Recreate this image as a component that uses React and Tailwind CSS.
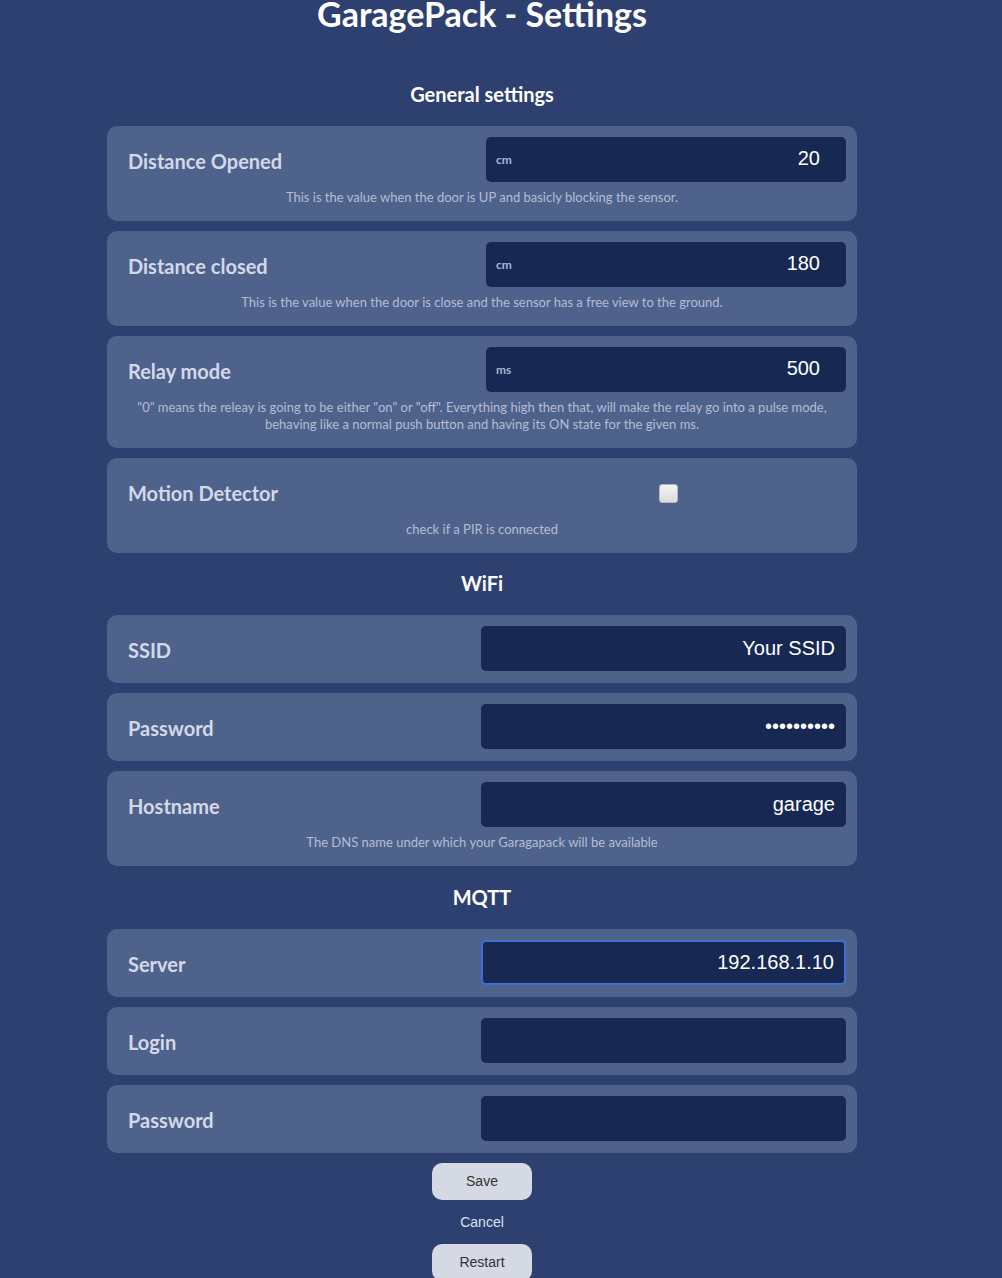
import React from 'react';

const uiFont = { fontFamily: 'Lato, "Noto Sans", sans-serif' };

// one settings card: label on the left, field on the right, optional hint below
const Row = ({ label, children, hint }) => (
  <div className="w-[750px] rounded-[10px] bg-[#4f628c] pt-[11px] pr-[11px] pl-[21px] pb-3">
    <div className="flex h-[45px] items-center justify-between">
      <span className="mt-[3px] text-[20px] font-bold text-[#d3d9e8]">{label}</span>
      {children}
    </div>
    {hint && (
      <p className="mt-[7px] pb-[3px] pr-[10px] text-center text-[13px] leading-[17px] text-[#b4bdd4]">{hint}</p>
    )}
  </div>
);

const UnitInput = ({ unit, value }) => (
  <div className="flex h-[45px] w-[360px] items-center rounded-[5px] bg-[#172852] pl-[10px] pr-[26px]">
    <span className="text-[12px] font-bold text-[#aab6d6]">{unit}</span>
    <input
      type="text"
      defaultValue={value}
      className="min-w-0 flex-1 bg-transparent pb-[3px] text-right text-[20px] text-white outline-none"
      style={{ fontFamily: '"Liberation Sans", Arial, sans-serif' }}
    />
  </div>
);

const TextInput = ({ value = '', type = 'text', focused }) => (
  <input
    type={type}
    defaultValue={value}
    className={
      'h-[45px] w-[365px] rounded-[5px] bg-[#172852] px-[11px] text-right text-[20px] text-white outline-none ' +
      (focused ? 'border-2 border-[#3f6fd6] pr-[10px]' : '')
    }
    style={{ fontFamily: '"Liberation Sans", Arial, sans-serif' }}
  />
);

const Heading = ({ children, className = '' }) => (
  <h3 className={'mb-[19px] text-center text-[20px] leading-[25px] font-bold text-white ' + className}>{children}</h3>
);

const App = () => {
  return (
    <div className="min-h-[1278px] bg-[#2e4070]" style={uiFont}>
      <div className="flex w-[964px] flex-col items-center">
        <h1 className="mt-[-9px] text-[34px] leading-[45px] font-bold text-white">GaragePack - Settings</h1>

        <Heading className="mt-[46px]">General settings</Heading>
        <div className="flex flex-col gap-[10px]">
          <Row label="Distance Opened" hint="This is the value when the door is UP and basicly blocking the sensor.">
            <UnitInput unit="cm" value="20" />
          </Row>
          <Row label="Distance closed" hint="This is the value when the door is close and the sensor has a free view to the ground.">
            <UnitInput unit="cm" value="180" />
          </Row>
          <Row
            label="Relay mode"
            hint={
              <>
                "0" means the releay is going to be either "on" or "off". Everything high then that, will make the relay go into a pulse mode,
                <br />
                behaving like a normal push button and having its ON state for the given ms.
              </>
            }
          >
            <UnitInput unit="ms" value="500" />
          </Row>
          <Row label="Motion Detector" hint="check if a PIR is connected">
            <div className="flex w-[360px] justify-center pl-[5px] pt-[4px]">
              <span className="block h-[19px] w-[19px] rounded-[3px] border border-[#b8b8b8] bg-gradient-to-b from-[#f4f4f4] to-[#dcdcdc]" />
            </div>
          </Row>
        </div>

        <Heading className="mt-[18px]">WiFi</Heading>
        <div className="flex flex-col gap-[10px]">
          <Row label="SSID">
            <TextInput value="Your SSID" />
          </Row>
          <Row label="Password">
            <TextInput type="password" value="1234567890" />
          </Row>
          <Row label="Hostname" hint="The DNS name under which your Garagapack will be available">
            <TextInput value="garage" />
          </Row>
        </div>

        <Heading className="mt-[19px]">MQTT</Heading>
        <div className="flex flex-col gap-[10px]">
          <Row label="Server">
            <TextInput value="192.168.1.10" focused />
          </Row>
          <Row label="Login">
            <TextInput />
          </Row>
          <Row label="Password">
            <TextInput type="password" />
          </Row>
        </div>

        <div className="mt-[10px] flex flex-col items-center" style={{ fontFamily: '"Liberation Sans", Arial, sans-serif' }}>
          <button className="h-[37px] w-[100px] rounded-[10px] bg-[#d5d9e3] text-[14px] text-[#333]">Save</button>
          <span className="my-[14px] text-[14px] leading-[16px] text-[#dde3f2]">Cancel</span>
          <button className="h-[37px] w-[100px] rounded-[10px] bg-[#d5d9e3] text-[14px] text-[#333]">Restart</button>
        </div>
      </div>
    </div>
  );
};

export default App;
